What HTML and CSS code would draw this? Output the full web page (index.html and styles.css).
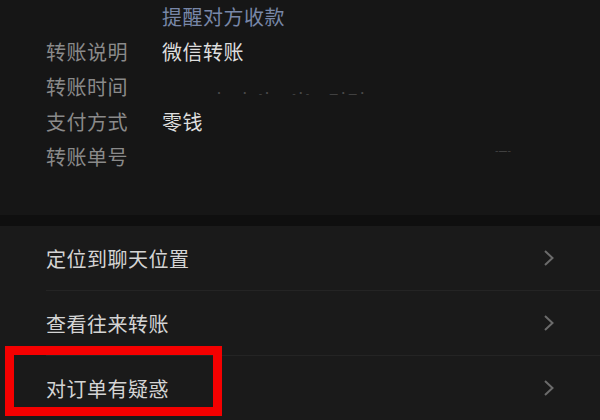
FILE: index.html
```html
<!DOCTYPE html>
<html lang="zh-CN">
<head>
    <meta charset="UTF-8">
    <meta name="viewport" content="width=device-width, initial-scale=1.0">
    <title>转账详情</title>
    <link rel="stylesheet" href="styles.css">
</head>
<body>

<div class="details">
    <div class="detail-row">
        <span class="label"></span>
        <a class="link" href="#">提醒对方收款</a>
    </div>
    <div class="detail-row">
        <span class="label">转账说明</span>
        <span class="value">微信转账</span>
    </div>
    <div class="detail-row">
        <span class="label">转账时间</span>
        <span class="value hidden-value time-mask">·&nbsp;&nbsp;&nbsp;&nbsp;&nbsp;&nbsp;&nbsp;·&nbsp;&nbsp;&nbsp;&nbsp;-·&nbsp;&nbsp;&nbsp;&nbsp;&nbsp;&nbsp;&nbsp;&nbsp;&nbsp;-·-&nbsp;&nbsp;&nbsp;&nbsp;&nbsp;&nbsp;&nbsp;&nbsp;&nbsp;—·—·</span>
    </div>
    <div class="detail-row">
        <span class="label">支付方式</span>
        <span class="value">零钱</span>
    </div>
    <div class="detail-row">
        <span class="label">转账单号</span>
        <span class="value hidden-value number-mask">-—-</span>
    </div>
</div>

<div class="menu">
    <div class="menu-item">
        <span>定位到聊天位置</span>
        <svg class="arrow" width="12" height="18" viewBox="0 0 12 18"><path d="M2 2 L9.5 9 L2 16" fill="none" stroke="#6b6b6b" stroke-width="2"/></svg>
    </div>
    <div class="menu-item">
        <span>查看往来转账</span>
        <svg class="arrow" width="12" height="18" viewBox="0 0 12 18"><path d="M2 2 L9.5 9 L2 16" fill="none" stroke="#6b6b6b" stroke-width="2"/></svg>
    </div>
    <div class="menu-item marked">
        <span>对订单有疑惑</span>
        <svg class="arrow" width="12" height="18" viewBox="0 0 12 18"><path d="M2 2 L9.5 9 L2 16" fill="none" stroke="#6b6b6b" stroke-width="2"/></svg>
        <div class="highlight"></div>
    </div>
</div>

</body>
</html>
```

FILE: styles.css
```css
/* Dark page, no default margin */
body {
    margin: 0;
    background-color: #0f0f0f;
    font-family: "Noto Sans CJK SC", "Noto Sans", sans-serif;
    overflow: hidden;
}

/* Top block with the transfer details */
.details {
    background-color: #161616;
    height: 216px;
    margin-top: -1px;
}

.detail-row {
    display: flex;
    height: 35px;
    align-items: center;
    font-size: 20px;
    letter-spacing: 0.5px;
}

.label {
    width: 116px;
    padding-left: 46px;
    color: #8a8a8a;
    flex-shrink: 0;
}

.value {
    color: #dedede;
}

.link {
    color: #7887a8;
    text-decoration: none;
}

/* Redacted values: only a few faint marks are left */
.hidden-value {
    color: #4a4a4a;
    font-size: 10px;
    letter-spacing: 0;
    white-space: pre;
}

.time-mask {
    margin-left: 52px;
    margin-top: 12px;
}

.number-mask {
    margin-left: 333px;
    margin-top: -14px;
}

/* Menu list below the gap */
.menu {
    margin-top: 11px;
    background-color: #1a1a1a;
}

.menu-item {
    position: relative;
    display: flex;
    align-items: center;
    justify-content: space-between;
    height: 64px;
    padding: 0 45px 0 46px;
    color: #d4d4d4;
    font-size: 20px;
    letter-spacing: 0.5px;
}

/* Hairline between rows, starting under the text */
.menu-item + .menu-item {
    border-top: 1px solid #242424;
    margin-left: 46px;
    padding-left: 0;
}

.arrow {
    display: block;
}

/* Red box drawn over the last row */
.highlight {
    position: absolute;
    left: -41px;
    top: -10px;
    width: 199px;
    height: 52px;
    border: 9px solid #f40000;
}
```
